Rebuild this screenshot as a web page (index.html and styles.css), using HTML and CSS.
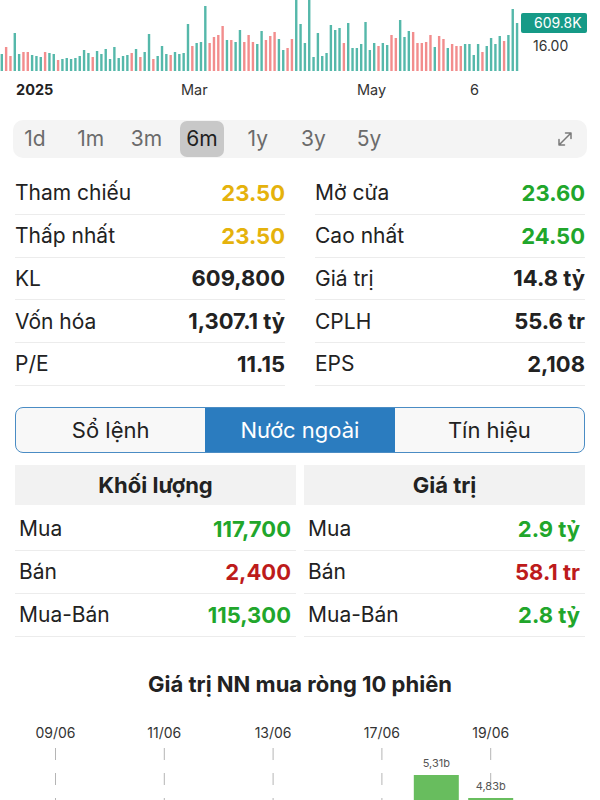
FILE: index.html
```html
<!DOCTYPE html>
<html lang="vi">
<head>
    <meta charset="UTF-8">
    <meta name="viewport" content="width=device-width, initial-scale=1.0">
    <title>Chi tiết cổ phiếu</title>
    <link rel="stylesheet" href="styles.css">
</head>
<body>
    <div class="volume-chart">
        <svg class="vol-bars" id="volBars" width="520" height="108" viewBox="0 0 520 108">
            <text class="tick-label strong" x="16" y="95">2025</text>
            <text class="tick-label" x="181" y="95">Mar</text>
            <text class="tick-label" x="357" y="95">May</text>
            <text class="tick-label" x="470" y="95">6</text>
        </svg>
        <div class="vol-axis">
            <span class="vol-tag">609.8K</span>
            <span class="vol-min">16.00</span>
        </div>
    </div>

    <div class="periods">
        <span class="period">1d</span>
        <span class="period">1m</span>
        <span class="period">3m</span>
        <span class="period active">6m</span>
        <span class="period">1y</span>
        <span class="period">3y</span>
        <span class="period">5y</span>
        <svg class="expand" width="20" height="20" viewBox="0 0 20 20">
            <path d="M4 16 L16 4 M10.5 4 H16 V9.5 M4 10.5 V16 H9.5" fill="none" stroke="#7a7a7a" stroke-width="1.5" stroke-linecap="round" stroke-linejoin="round"/>
        </svg>
    </div>

    <div class="stats">
        <div class="stat"><span>Tham chiếu</span><b class="ref">23.50</b></div>
        <div class="stat"><span>Mở cửa</span><b class="up">23.60</b></div>
        <div class="stat"><span>Thấp nhất</span><b class="ref">23.50</b></div>
        <div class="stat"><span>Cao nhất</span><b class="up">24.50</b></div>
        <div class="stat"><span>KL</span><b>609,800</b></div>
        <div class="stat"><span>Giá trị</span><b>14.8 tỷ</b></div>
        <div class="stat"><span>Vốn hóa</span><b>1,307.1 tỷ</b></div>
        <div class="stat"><span>CPLH</span><b>55.6 tr</b></div>
        <div class="stat"><span>P/E</span><b>11.15</b></div>
        <div class="stat"><span>EPS</span><b>2,108</b></div>
    </div>

    <div class="tabs">
        <span class="tab">Sổ lệnh</span>
        <span class="tab active">Nước ngoài</span>
        <span class="tab">Tín hiệu</span>
    </div>

    <div class="foreign">
        <div class="col">
            <div class="col-head">Khối lượng</div>
            <div class="frow"><span>Mua</span><b class="up">117,700</b></div>
            <div class="frow"><span>Bán</span><b class="down">2,400</b></div>
            <div class="frow"><span>Mua-Bán</span><b class="up">115,300</b></div>
        </div>
        <div class="col">
            <div class="col-head">Giá trị</div>
            <div class="frow"><span>Mua</span><b class="up">2.9 tỷ</b></div>
            <div class="frow"><span>Bán</span><b class="down">58.1 tr</b></div>
            <div class="frow"><span>Mua-Bán</span><b class="up">2.8 tỷ</b></div>
        </div>
    </div>

    <h3 class="net-title">Giá trị NN mua ròng 10 phiên</h3>
    <svg class="net-chart" id="netChart" width="600" height="90" viewBox="0 0 600 90"></svg>

    <script>
        // volume bars, t = tăng (teal), r = giảm (red)
        const vols = ('17t,24r,15r,38t,17t,19r,19r,16t,15t,14t,19r,18t,17t,11r,12t,13t,12t,13t,15t,21t,' +
            '18t,14r,20t,17t,22t,12t,24t,13t,15t,16t,18r,22t,14r,19t,37t,12r,15t,25t,17t,16r,' +
            '19t,17t,18t,47t,25r,28t,29t,65t,28r,34r,36r,45r,31t,31r,29t,41t,29r,36r,29r,27t,' +
            '40t,31r,35r,39r,32t,21t,23r,32r,71t,47t,28t,71t,14t,38t,15t,18t,46t,41t,43t,28r,' +
            '48t,23t,23t,27t,49t,21t,28t,25r,28t,26t,36r,33r,51t,34t,40t,39r,28r,28r,29r,36r,' +
            '24t,35r,32r,23t,27r,25r,25r,27t,27t,16t,27t,19r,25t,33t,27t,35t,30r,36t,62t,48t,47t').split(',');

        const NS = 'http://www.w3.org/2000/svg';
        const volSvg = document.getElementById('volBars');
        vols.forEach((v, i) => {
            const h = parseInt(v);
            const r = document.createElementNS(NS, 'rect');
            r.setAttribute('x', (0.6 + i * 4.33).toFixed(2));
            r.setAttribute('y', 71 - h);
            r.setAttribute('width', 2.4);
            r.setAttribute('height', h);
            r.setAttribute('class', v.endsWith('t') ? 'bar-up' : 'bar-down');
            volSvg.appendChild(r);
        });

        // 10 sessions, net foreign buy in billions
        const sessions = [
            { d: '09/06', v: 0 }, { d: '10/06', v: 0 }, { d: '11/06', v: 0 }, { d: '12/06', v: 0 },
            { d: '13/06', v: 0 }, { d: '16/06', v: 0 }, { d: '17/06', v: 0 }, { d: '18/06', v: 5.31 },
            { d: '19/06', v: 4.83 }, { d: '20/06', v: 0 }
        ];
        const net = document.getElementById('netChart');
        const step = 54.4, first = 55.5, scale = 47.9, base = 65 + 5.31 * 47.9;

        function add(tag, attrs, text) {
            const el = document.createElementNS(NS, tag);
            for (const k in attrs) el.setAttribute(k, attrs[k]);
            if (text) el.textContent = text;
            net.appendChild(el);
            return el;
        }

        sessions.forEach((s, i) => {
            const cx = first + i * step;
            if (i % 2 === 0) {
                add('text', { x: cx, y: 28, class: 'date-label' }, s.d);
                add('line', { x1: cx, y1: 38, x2: cx, y2: 90, class: 'grid' });
            }
        });
        sessions.forEach((s, i) => {
            if (!s.v) return;
            const cx = first + i * step;
            const top = base - s.v * scale;
            add('rect', { x: cx - 22.5, y: top, width: 45, height: base - top, class: 'net-bar' });
            add('text', { x: cx, y: top - 8, class: 'net-label' }, s.v.toFixed(2).replace('.', ',') + 'b');
        });
    </script>
</body>
</html>
```

FILE: styles.css
```css
html, body {
    margin: 0;
    height: 800px;
    overflow: hidden;
}
body {
    font-family: Inter, "Noto Sans", sans-serif;
    background: #fff;
    color: #222;
}

.volume-chart {
    display: flex;
    height: 108px;
}
.vol-bars {
    display: block;
}
.bar-up {
    fill: #55b8aa;
}
.bar-down {
    fill: #f28d8d;
}
.tick-label {
    font-size: 14.5px;
    fill: #333;
}
.tick-label.strong {
    font-weight: 700;
    fill: #222;
}
.vol-axis {
    display: flex;
    flex-direction: column;
    align-items: flex-start;
    padding-top: 13px;
    margin-left: 1px;
}
.vol-tag {
    background: #169a87;
    color: #fff;
    font-size: 14px;
    line-height: 20px;
    padding: 0 5px 0 13px;
    border-radius: 2px;
}
.vol-min {
    font-size: 14px;
    color: #333;
    margin-top: 4px;
    padding-left: 12px;
}

.periods {
    display: flex;
    align-items: center;
    gap: 11.7px;
    height: 36px;
    padding: 1px 0;
    margin: 12px 13px 0;
    background: #f4f4f4;
    border-radius: 10px;
}
.period {
    width: 44px;
    height: 36px;
    line-height: 36px;
    text-align: center;
    font-size: 21px;
    color: #6b6b6b;
    border-radius: 7px;
}
.period.active {
    background: #c8c8c8;
    color: #1f1f1f;
}
.expand {
    margin-left: auto;
    margin-right: 12px;
}

.stats {
    display: grid;
    grid-template-columns: 1fr 1fr;
    column-gap: 30px;
    margin: 14px 15px 0;
}
.stat {
    display: flex;
    justify-content: space-between;
    align-items: center;
    height: 41.75px;
    border-bottom: 1px solid #ececec;
    font-size: 21px;
}
.stat b, .frow b {
    font-size: 22px;
    font-weight: 700;
    color: #222;
}
b.ref {
    color: #e5b20c;
}
b.up {
    color: #21a62b;
}
b.down {
    color: #bd1b1b;
}

.tabs {
    display: flex;
    margin: 21px 15px 0;
    height: 44px;
    border: 1px solid #4a8cc4;
    border-radius: 8px;
    overflow: hidden;
    background: #f8f8f8;
}
.tab {
    flex: 1;
    text-align: center;
    line-height: 44px;
    font-size: 22px;
    color: #222;
}
.tab.active {
    background: #2b7cbf;
    color: #fff;
}

.foreign {
    display: grid;
    grid-template-columns: 1fr 1fr;
    column-gap: 8px;
    margin: 12px 15px 0;
}
.col-head {
    height: 40px;
    line-height: 40px;
    background: #f2f2f2;
    text-align: center;
    font-size: 22px;
    font-weight: 700;
    margin-bottom: 3px;
}
.frow {
    display: flex;
    justify-content: space-between;
    align-items: center;
    height: 42px;
    padding: 0 5px 0 4px;
    border-bottom: 1px solid #ececec;
    font-size: 21px;
}

.net-title {
    margin: 35px 0 0;
    text-align: center;
    font-size: 22px;
    line-height: 24px;
    font-weight: 700;
}
.net-chart {
    display: block;
    margin-top: 14px;
}
.date-label {
    font-size: 14px;
    fill: #333;
    text-anchor: middle;
}
.grid {
    stroke: #b5b5b5;
    stroke-width: 1;
    stroke-dasharray: 12 13;
}
.net-bar {
    fill: #68bd5e;
}
.net-label {
    font-size: 11px;
    fill: #555;
    text-anchor: middle;
}
```
